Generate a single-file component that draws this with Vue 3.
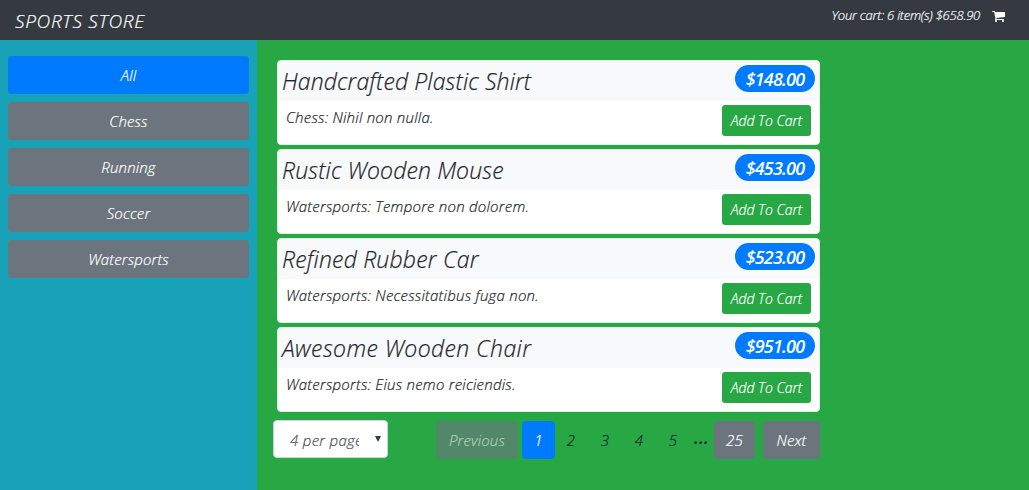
<script setup>
const categories = ['All', 'Chess', 'Running', 'Soccer', 'Watersports']
const products = [
  { name: 'Handcrafted Plastic Shirt', text: 'Chess: Nihil non nulla.', price: '$148.00' },
  { name: 'Rustic Wooden Mouse', text: 'Watersports: Tempore non dolorem.', price: '$453.00' },
  { name: 'Refined Rubber Car', text: 'Watersports: Necessitatibus fuga non.', price: '$523.00' },
  { name: 'Awesome Wooden Chair', text: 'Watersports: Eius nemo reiciendis.', price: '$951.00' }
]
const pages = [2, 3, 4, 5]
</script>

<template>
  <div class="store">
    <header class="navbar">
      <a class="brand">SPORTS STORE</a>
      <div class="cart">
        <span class="cart-text">Your cart: 6 item(s) $658.90</span>
        <svg class="cart-icon" viewBox="0 0 1664 1536" width="13" height="12">
          <path fill="#fff" d="M640 1408q0 52-38 90t-90 38-90-38-38-90 38-90 90-38 90 38 38 90zm896 0q0 52-38 90t-90 38-90-38-38-90 38-90 90-38 90 38 38 90zm128-1088v512q0 24-16.500 42.500t-40.500 21.500l-1044 122q13 60 13 70 0 16-24 64h920q26 0 45 19t19 45-19 45-45 19h-1024q-26 0-45-19t-19-45q0-11 8-31.500t16-36 21.500-40 15.500-29.500l-177-823h-204q-26 0-45-19t-19-45 19-45 45-19h256q16 0 28.500 6.500t19.500 15.500 13 24.500 8 26 5.500 29.500 4.500 26h1201q26 0 45 19t19 45z" />
        </svg>
      </div>
    </header>
    <div class="body">
      <nav class="sidebar">
        <button v-for="(c, i) in categories" :key="c" class="btn category" :class="{ primary: i === 0 }">{{ c }}</button>
      </nav>
      <main class="main">
        <article v-for="(p, i) in products" :key="p.name" class="card">
          <h4 class="card-head">
            <span class="name" :class="{ wide: i > 1, wider: i === 3 }">{{ p.name }}</span>
            <span class="price">{{ p.price }}</span>
          </h4>
          <div class="card-body">
            <span class="desc">{{ p.text }}</span>
            <button class="btn add">Add To Cart</button>
          </div>
        </article>
        <div class="controls">
          <div class="select">
            <span class="select-text">4 per page</span>
            <svg class="arrow" width="6" height="6" viewBox="0 0 6 6"><path d="M0 0h6L3 6z" fill="#343a40" /></svg>
          </div>
          <div class="pager">
            <button class="btn previous">Previous</button>
            <button class="btn primary current">1</button>
            <button v-for="n in pages" :key="n" class="btn page">{{ n }}</button>
            <span class="dots">...</span>
            <button class="btn last">25</button>
            <button class="btn next">Next</button>
          </div>
        </div>
      </main>
    </div>
  </div>
</template>

<style>
body { margin: 0; background: #28a745; }
</style>

<style scoped>
.store {
  width: 1029px;
  height: 490px;
  display: flex;
  flex-direction: column;
  overflow: hidden;
  font: italic 300 16px/24px "Open Sans", "Noto Sans", sans-serif;
  -webkit-text-stroke: 0.2px;
  color: #212529;
  background: #28a745;
  white-space: nowrap;
}
.store * { box-sizing: border-box; }
.navbar {
  flex: none;
  height: 40px;
  display: flex;
  justify-content: space-between;
  padding: 0 23px 0 15px;
  background: #343a40;
  color: #fff;
}
.brand { font-size: 19px; line-height: 42px; letter-spacing: 0.7px; }
.cart { display: flex; gap: 12px; }
.cart-text { font-size: 13px; line-height: 31px; letter-spacing: -0.22px; }
.cart-icon { margin: 10px 1px 0 0; }
.body { flex: 1; display: flex; }
.sidebar {
  width: 257px;
  padding: 16px 8px;
  display: flex;
  flex-direction: column;
  gap: 8px;
  background: #17a2b8;
}
.btn {
  height: 38px;
  padding: 0;
  border: 0;
  border-radius: 4px;
  background: #6c757d;
  color: #fff;
  font: inherit;
  font-size: 15px;
  line-height: 38px;
  letter-spacing: 0.15px;
  text-align: center;
}
.btn.primary { background: #007bff; }
.main {
  width: 563px;
  padding: 20px 0 0 20px;
}
.card {
  height: 85px;
  margin-bottom: 4px;
  border: 1px solid #dff0e3;
  border-radius: 4px;
  background: #fff;
  overflow: hidden;
}
.card-head {
  height: 40px;
  margin: 0;
  padding: 4px 4px 0;
  display: flex;
  justify-content: space-between;
  background: #f8f9fa;
  font-weight: 300;
}
.name { font-size: 23px; line-height: 33px; letter-spacing: 0.13px; }
.name.wide { letter-spacing: 0.2px; }
.name.wider { letter-spacing: 0.4px; }
.price {
  width: 80px;
  height: 27px;
  border-radius: 14px;
  background: #007bff;
  color: #fff;
  font-size: 18px;
  font-weight: 600;
  line-height: 29px;
  letter-spacing: -0.8px;
  text-align: center;
  -webkit-text-stroke: 0;
}
.card-body {
  padding: 4px 8px;
  display: flex;
  justify-content: space-between;
}
.desc { font-size: 15px; line-height: 25px; letter-spacing: 0.23px; }
.add {
  width: 89px;
  height: 31px;
  border-radius: 3px;
  background: #28a745;
  font-size: 14px;
  line-height: 32px;
  letter-spacing: 0;
}
.controls {
  display: flex;
  justify-content: space-between;
  margin: 8px 0 0 -4px;
}
.select {
  width: 115px;
  height: 38px;
  padding: 0 6px 0 16px;
  display: flex;
  justify-content: space-between;
  border: 1px solid #ced4da;
  border-radius: 4px;
  background: #fff;
  color: #495057;
}
.select-text { width: 69px; overflow: hidden; line-height: 39px; font-size: 15px; letter-spacing: 0.3px; }
.arrow { margin-top: 15px; }
.pager { display: flex; margin-top: 1px; }
.previous { width: 82px; margin-right: 4px; background: #53876a; color: #a9d3b4; }
.current { width: 33px; }
.page { width: 34px; padding-right: 2px; background: transparent; color: #212529; }
.dots { width: 23px; padding-right: 2px; font-size: 20px; font-weight: 400; line-height: 32px; letter-spacing: 0; text-align: center; }
.last { width: 41px; margin-right: 8px; }
.next { width: 57px; }
</style>
